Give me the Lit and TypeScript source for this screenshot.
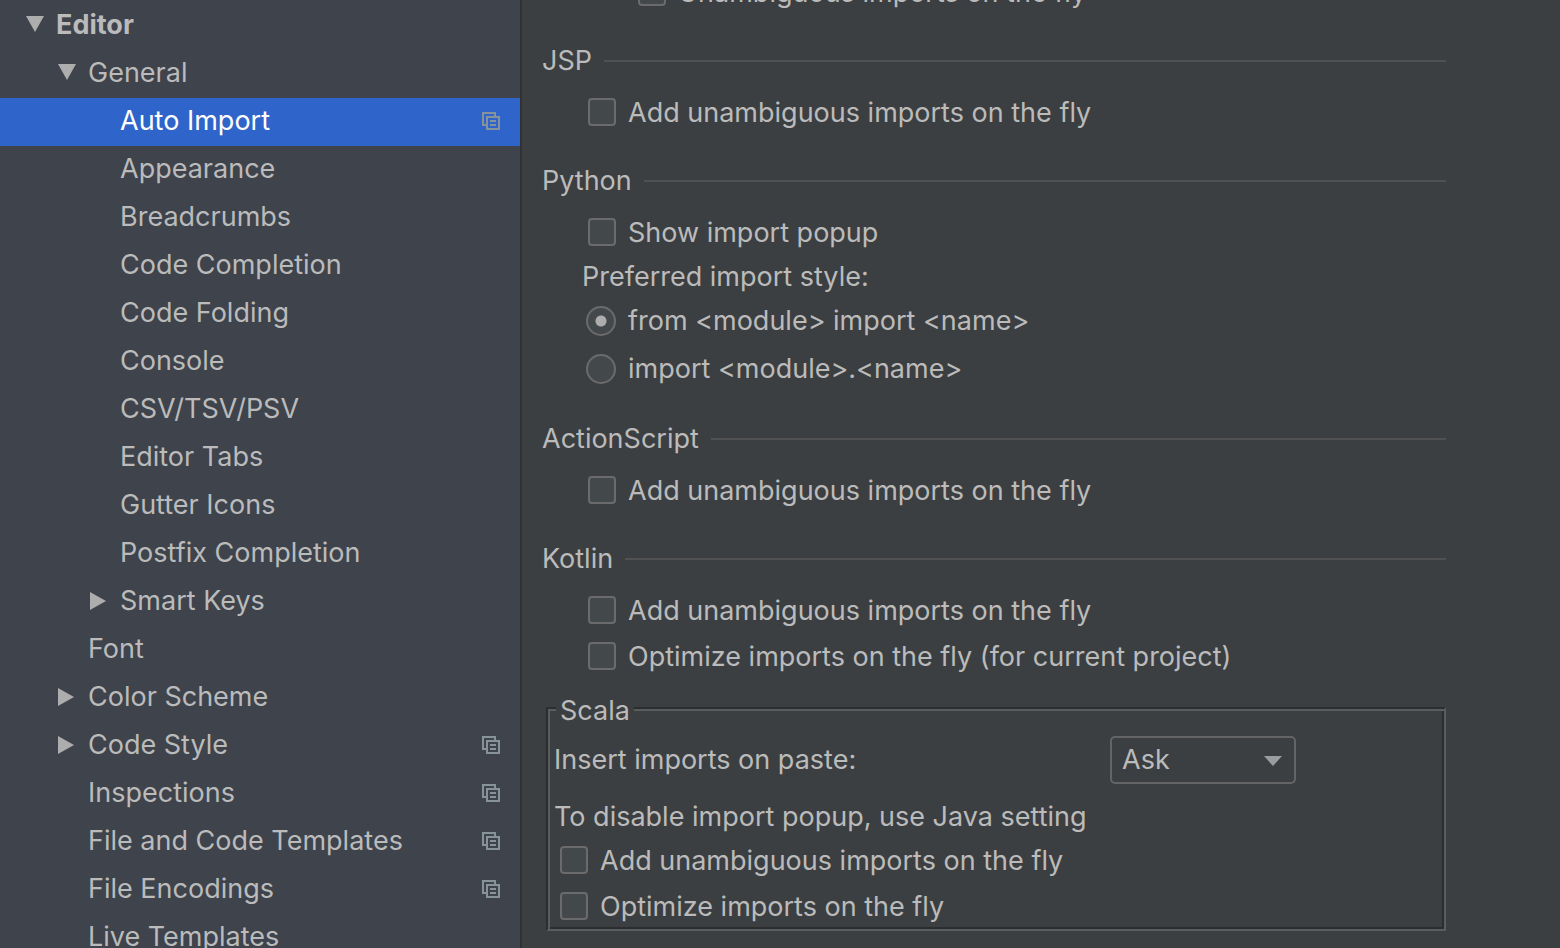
import { LitElement, html, css, svg, nothing } from "lit";
import { customElement, property, state } from "lit/decorators.js";
import { classMap } from "lit/directives/class-map.js";

interface TreeItem {
  label: string;
  level: 0 | 1 | 2;
  branch?: "open" | "closed";
  project?: boolean;
}

const ITEMS: TreeItem[] = [
  { label: "Editor", level: 0, branch: "open" },
  { label: "General", level: 1, branch: "open" },
  { label: "Auto Import", level: 2, project: true },
  { label: "Appearance", level: 2 },
  { label: "Breadcrumbs", level: 2 },
  { label: "Code Completion", level: 2 },
  { label: "Code Folding", level: 2 },
  { label: "Console", level: 2 },
  { label: "CSV/TSV/PSV", level: 2 },
  { label: "Editor Tabs", level: 2 },
  { label: "Gutter Icons", level: 2 },
  { label: "Postfix Completion", level: 2 },
  { label: "Smart Keys", level: 2, branch: "closed" },
  { label: "Font", level: 1 },
  { label: "Color Scheme", level: 1, branch: "closed" },
  { label: "Code Style", level: 1, branch: "closed", project: true },
  { label: "Inspections", level: 1, project: true },
  { label: "File and Code Templates", level: 1, project: true },
  { label: "File Encodings", level: 1, project: true },
  { label: "Live Templates", level: 1 },
];

const openArrow = svg`<path d="M0 0H18L9 16Z" />`;
const closedArrow = svg`<path d="M0 0L16 9L0 18Z" />`;

@customElement("settings-tree")
export class SettingsTree extends LitElement {
  @state() selected = "Auto Import";

  static styles = css`
    :host {
      display: block;
      overflow: hidden;
      background: #3e434c;
      border-right: 2px solid #323232;
    }
    .list {
      margin: 0;
      padding: 2px 0 0;
      list-style: none;
    }
    .row {
      display: flex;
      align-items: flex-start;
      height: 48px;
      padding: 0 20px 0 24px;
    }
    .level-1 {
      padding-left: 56px;
    }
    .level-2 {
      padding-left: 88px;
    }
    .slot {
      flex: none;
      display: flex;
      align-items: center;
      width: 32px;
      height: 46px;
      box-sizing: border-box;
      padding: 0 0 0 2px;
      border: 0;
      background: none;
    }
    .arrow {
      fill: #adadad;
    }
    .link {
      flex: 1;
      height: 46px;
      color: #bbbbbb;
      line-height: 46px;
      text-decoration: none;
      white-space: nowrap;
    }
    .level-0 .link {
      font-weight: 700;
    }
    .selected {
      background: #2f65ca;
    }
    .selected .link {
      color: #ffffff;
    }
    .project {
      flex: none;
      height: 46px;
      fill: none;
      stroke: #87939a;
      stroke-width: 2;
    }
  `;

  private select(event: Event, label: string) {
    event.preventDefault();
    this.selected = label;
  }

  render() {
    return html`<nav aria-label="Settings">
      <ul class="list">
        ${ITEMS.map((item) => {
          const active = item.label === this.selected;
          return html`<li
            class=${classMap({ row: true, [`level-${item.level}`]: true, selected: active })}
          >
            ${item.branch
              ? html`<button
                  class="slot"
                  aria-label=${`Toggle ${item.label}`}
                  aria-expanded=${item.branch === "open"}
                >
                  <svg class="arrow" width="18" height="18" viewBox="0 0 18 18">
                    ${item.branch === "open" ? openArrow : closedArrow}
                  </svg>
                </button>`
              : html`<span class="slot"></span>`}
            <a
              class="link"
              href="#"
              aria-current=${active ? "page" : nothing}
              @click=${(e: Event) => this.select(e, item.label)}
              >${item.label}</a
            >
            ${item.project
              ? html`<svg class="project" width="18" height="18" viewBox="0 0 18 18" aria-hidden="true">
                  <path d="M4 13H1V1H13V4M5 5H17V17H5ZM8 9H14M8 13H14" />
                </svg>`
              : nothing}
          </li>`;
        })}
      </ul>
    </nav>`;
  }
}

@customElement("option-toggle")
export class OptionToggle extends LitElement {
  @property() label = "";
  @property() kind: "checkbox" | "radio" = "checkbox";
  @property({ type: Boolean }) checked = false;

  static styles = css`
    :host {
      display: block;
    }
    .option {
      display: flex;
      align-items: center;
      gap: 12px;
      height: 32px;
      line-height: 32px;
      white-space: nowrap;
    }
    .box {
      appearance: none;
      flex: none;
      box-sizing: border-box;
      width: 28px;
      height: 28px;
      margin: 0 0 2px;
      border: 2px solid #6b6b6b;
      border-radius: 4px;
      background: #43494a;
    }
    .box:checked {
      background: #43494a radial-gradient(circle, #adadad 8px, transparent 9px);
    }
    .round {
      width: 30px;
      height: 30px;
      margin: 0 0 0 -2px;
      border-radius: 50%;
    }
    .round:checked {
      background: #43494a radial-gradient(circle, #adadad 5px, transparent 6px);
    }
  `;

  private change(event: Event) {
    this.checked = (event.target as HTMLInputElement).checked;
    this.dispatchEvent(new Event("change", { bubbles: true }));
  }

  render() {
    const radio = this.kind === "radio";
    return html`<label class="option">
      <input
        class=${classMap({ box: true, round: radio })}
        type=${this.kind}
        .checked=${this.checked}
        @change=${this.change}
      />
      <span>${this.label}</span>
    </label>`;
  }
}

@customElement("app-root")
export class AppRoot extends LitElement {
  @state() importForm = "from";

  static styles = css`
    :host {
      display: grid;
      grid-template-columns: 522px minmax(0, 1fr);
      height: 100vh;
      overflow: hidden;
      background: #3c3f41;
      color: #bbbbbb;
      font: 27px/32px Inter, "Liberation Sans", sans-serif;
    }
    .page {
      min-width: 0;
      overflow: hidden;
      padding: 0 114px 0 20px;
    }
    .scrolled {
      margin-top: -23px;
    }
    .nested {
      padding-left: 96px;
    }
    .section {
      margin-top: 36px;
    }
    .heading {
      display: flex;
      align-items: center;
      gap: 12px;
      margin: 0 0 20px;
      font-size: 27px;
      font-weight: 400;
      line-height: 32px;
    }
    .heading::after {
      content: "";
      flex: 1;
      height: 2px;
      background: #515151;
    }
    .options {
      display: flex;
      flex-direction: column;
      gap: 14px;
      padding-left: 46px;
    }
    .styles {
      margin-top: 12px;
      padding-left: 40px;
    }
    .radios {
      display: flex;
      flex-direction: column;
      gap: 16px;
      padding: 12px 0 2px 6px;
    }
    .group {
      min-width: 0;
      margin: 16px 0 0 4px;
      padding: 9px 6px 6px;
      border: 2px solid;
      border-color: #2b2d2e #5a5d5e #5a5d5e #2b2d2e;
      box-shadow:
        inset 2px 2px 0 #5a5d5e,
        inset -2px -2px 0 #2b2d2e;
    }
    .legend {
      margin-left: 2px;
      padding: 6px 4px 0;
      background: #3c3f41;
    }
    .field {
      display: grid;
      grid-template-columns: minmax(0, 556px) 186px;
      align-items: center;
      margin-bottom: 17px;
    }
    .combo {
      position: relative;
    }
    .select {
      appearance: none;
      display: block;
      box-sizing: border-box;
      width: 100%;
      height: 48px;
      padding: 0 32px 0 10px;
      border: 2px solid #646464;
      border-radius: 5px;
      background: #3c3f41;
      color: inherit;
      font: inherit;
    }
    .caret {
      position: absolute;
      right: 14px;
      top: 20px;
      fill: #9a9da0;
      pointer-events: none;
    }
    .group .options {
      margin-top: 12px;
      padding-left: 6px;
    }
  `;

  private section(title: string, options: string[], extra: unknown = nothing) {
    return html`<section class="section">
      <h2 class="heading">${title}</h2>
      <div class="options">
        ${options.map((label) => html`<option-toggle label=${label}></option-toggle>`)}
      </div>
      ${extra}
    </section>`;
  }

  private importStyle() {
    const choices = [
      ["from", "from <module> import <name>"],
      ["import", "import <module>.<name>"],
    ];
    return html`<div class="styles" role="radiogroup" aria-labelledby="style-label">
      <div id="style-label">Preferred import style:</div>
      <div class="radios">
        ${choices.map(
          ([value, label]) => html`<option-toggle
            kind="radio"
            label=${label}
            .checked=${this.importForm === value}
            @change=${() => (this.importForm = value)}
          ></option-toggle>`
        )}
      </div>
    </div>`;
  }

  render() {
    const add = "Add unambiguous imports on the fly";
    return html`
      <settings-tree></settings-tree>
      <main class="page">
        <div class="scrolled">
          <option-toggle class="nested" label="Unambiguous imports on the fly"></option-toggle>
          ${this.section("JSP", [add])}
          ${this.section("Python", ["Show import popup"], this.importStyle())}
          ${this.section("ActionScript", [add])}
          ${this.section("Kotlin", [add, "Optimize imports on the fly (for current project)"])}
          <fieldset class="group">
            <legend class="legend">Scala</legend>
            <div class="field">
              <label for="paste">Insert imports on paste:</label>
              <div class="combo">
                <select class="select" id="paste">
                  <option>Ask</option>
                  <option>All</option>
                  <option>None</option>
                </select>
                <svg class="caret" width="18" height="10" viewBox="0 0 18 10" aria-hidden="true">
                  <path d="M0 0H18L9 10Z" />
                </svg>
              </div>
            </div>
            <div>To disable import popup, use Java setting</div>
            <div class="options">
              <option-toggle label=${add}></option-toggle>
              <option-toggle label="Optimize imports on the fly"></option-toggle>
            </div>
          </fieldset>
        </div>
      </main>
    `;
  }
}
